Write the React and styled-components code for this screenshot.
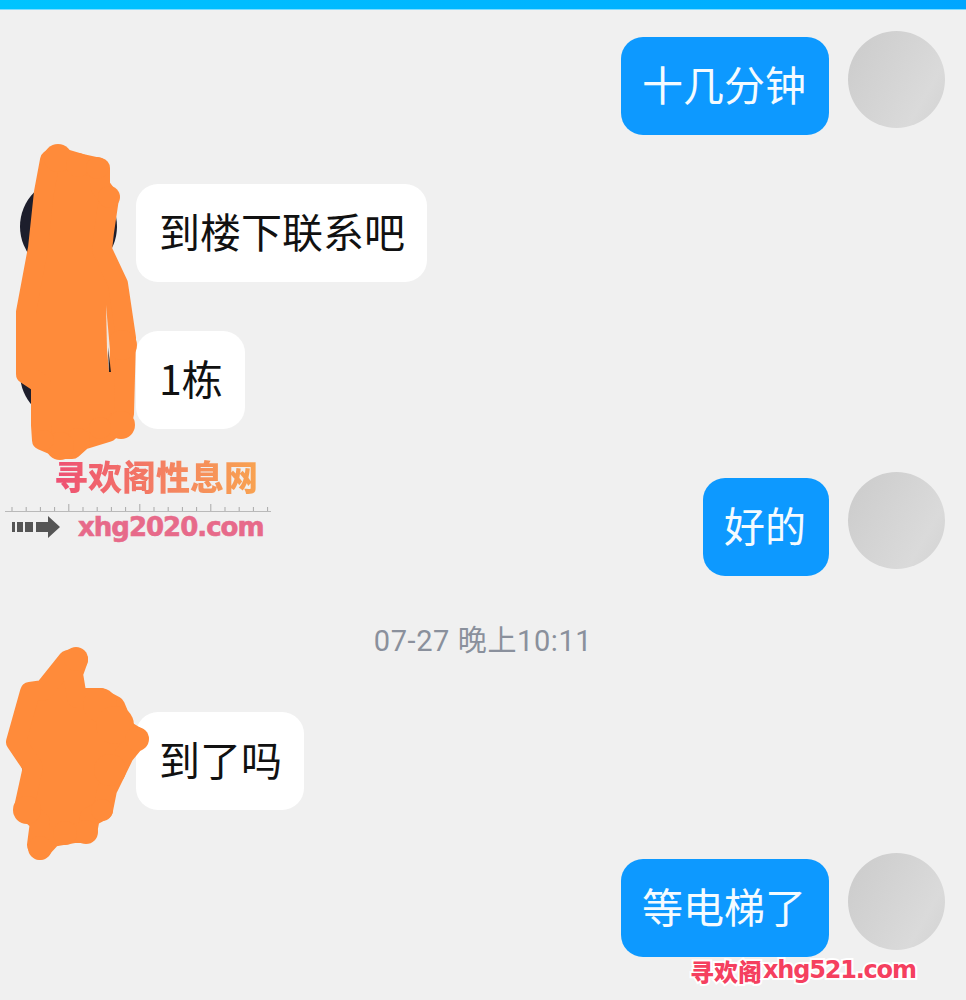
import styled, { createGlobalStyle } from "styled-components";

const Global = createGlobalStyle`
  html, body {
    margin: 0;
    padding: 0;
    background: #f0f0f0;
  }
`;

const Page = styled.div`
  position: relative;
  width: 966px;
  height: 1000px;
  overflow: hidden;
  background: #f0f0f0;
  font-family: "Noto Sans CJK SC", "Noto Sans", sans-serif;
`;

const TopBar = styled.div`
  box-sizing: border-box;
  height: 10px;
  border-bottom: 1px solid #7fdcff;
  background: linear-gradient(90deg, #00c4ff 0%, #00b6ff 50%, #00a6ff 100%);
`;

const Thread = styled.div`
  display: flex;
  flex-direction: column;
  gap: 43px;
  padding: 21px 21px 0 20px;
`;

const Row = styled.div`
  display: flex;
  flex-direction: ${(p) => (p.$mine ? "row-reverse" : "row")};
  align-items: flex-start;
  gap: 19px;
  height: 104px;
`;

const Avatar = styled.div`
  flex: none;
  width: 97px;
  height: 97px;
  border-radius: 50%;
  background: ${(p) =>
    p.$mine
      ? "linear-gradient(120deg, #cbcbcb 0%, #d6d6d6 55%, #dadada 75%, #d2d2d2 100%)"
      : "#1d1e2c"};
`;

const Bubble = styled.div`
  box-sizing: border-box;
  margin-top: 6px;
  height: 98px;
  padding: ${(p) => (p.$mine ? "0 23px 6px 21px" : "0 22px 6px 23px")};
  display: flex;
  align-items: center;
  border-radius: 22px;
  font-size: 41px;
  line-height: 1;
  color: ${(p) => (p.$mine ? "#f4fbff" : "#111111")};
  background: ${(p) => (p.$mine ? "#0d99ff" : "#ffffff")};
`;

const TimeRow = styled.div`
  box-sizing: border-box;
  height: 44px;
  padding: 0 0 6px 1px;
  display: flex;
  align-items: center;
  justify-content: center;
  font-family: "Roboto", "Noto Sans CJK SC", sans-serif;
  font-size: 29px;
  letter-spacing: 0.6px;
  color: #8a909c;
`;

const Scribble = styled.svg`
  position: absolute;
  left: 0;
  top: 0;
  pointer-events: none;
`;

const SiteMark = styled.div`
  position: absolute;
  left: 5px;
  top: 456px;
  width: 266px;
`;

const SiteTitle = styled.div`
  margin: 0 0 7px 49px;
  font-size: 34px;
  line-height: 40px;
  font-weight: 900;
  white-space: nowrap;
  background: linear-gradient(90deg, #ee4f74 0%, #f58a5e 60%, #f9a74e 100%);
  -webkit-background-clip: text;
  background-clip: text;
  color: transparent;
`;

const SiteRow = styled.div`
  display: flex;
  align-items: center;
  gap: 17px;
  margin-top: -1px;
`;

const SiteUrl = styled.div`
  font-family: "DejaVu Sans", sans-serif;
  font-size: 26px;
  line-height: 30px;
  font-weight: 700;
  color: #e76a8a;
  letter-spacing: -1px;
  -webkit-text-stroke: 0.6px #e76a8a;
  white-space: nowrap;
`;

const CornerMark = styled.div`
  position: absolute;
  left: 690px;
  top: 954px;
  display: flex;
  align-items: center;
  height: 32px;
  color: #f5405f;
  font-weight: 900;
  white-space: nowrap;
  -webkit-text-stroke: 4px #ffffff;
  paint-order: stroke fill;
`;

const CornerHan = styled.span`
  font-size: 24px;
`;

const CornerUrl = styled.span`
  font-family: "DejaVu Sans", sans-serif;
  font-size: 24px;
  font-weight: 700;
  letter-spacing: -1.2px;
  margin-left: 1px;
`;

const ticks = Array.from({ length: 19 }, (_, i) => i);

function Ruler() {
  return (
    <svg width="266" height="10" viewBox="0 0 266 10" style={{ display: "block" }}>
      <line x1="0" y1="8.5" x2="266" y2="8.5" stroke="#b9b9b9" strokeWidth="1" />
      {ticks.map((i) => (
        <line
          key={i}
          x1={7 + i * 14.2}
          x2={7 + i * 14.2}
          y1={i % 5 === 4 ? 1 : 4}
          y2="8"
          stroke="#a9a9a9"
          strokeWidth="1"
        />
      ))}
    </svg>
  );
}

function Arrow() {
  return (
    <svg width="56" height="24" viewBox="0 0 56 24" style={{ flex: "none" }}>
      <g fill="#555555">
        <rect x="7" y="7" width="3" height="10" />
        <rect x="12" y="7" width="6" height="10" />
        <rect x="20" y="7" width="8" height="10" />
        <path d="M31 7h12V1l12 11-12 11v-6H31z" />
      </g>
    </svg>
  );
}

// round dabs on the edge of the two scribbles
const dabs = [
  [58, 158, 14], [78, 165, 12], [97, 168, 11], [109, 197, 11], [121, 425, 14],
  [100, 428, 11], [78, 440, 12], [60, 446, 14], [44, 440, 10], [122, 345, 15],
  [76, 659, 12], [100, 705, 17], [115, 725, 19], [137, 739, 12], [102, 810, 11],
  [86, 832, 12], [65, 833, 12], [40, 848, 12], [27, 810, 14], [110, 770, 16],
];

const messages = [
  { mine: true, text: "十几分钟" },
  { text: "到楼下联系吧" },
  { text: "1栋" },
  { mine: true, text: "好的" },
  { time: "07-27 晚上10:11" },
  { text: "到了吗" },
  { mine: true, text: "等电梯了" },
];

export default function App() {
  return (
    <Page>
      <Global />
      <TopBar />
      <Thread>
        {messages.map((m, i) =>
          m.time ? (
            <TimeRow key={i}>{m.time}</TimeRow>
          ) : (
            <Row key={i} $mine={m.mine}>
              <Avatar $mine={m.mine} />
              <Bubble $mine={m.mine}>{m.text}</Bubble>
            </Row>
          )
        )}
      </Thread>

      <Scribble width="966" height="1000" viewBox="0 0 966 1000">
        <g fill="#ff8b3a" stroke="#ff8b3a" strokeWidth="20" strokeLinejoin="round">
          <path d="M55 156 L82 164 L100 168 L100 186 L109 198 L104 232 L102 250 L118 284 L126 338 L124 414 L108 432 L82 440 L72 449 L63 449 L42 440 L41 425 L41 384 L26 374 L26 312 L38 248 L44 192 L50 160 Z" />
          <path d="M75 658 L78 660 L73 674 L77 698 L100 698 L115 706 L125 730 L138 738 L124 755 L107 790 L103 810 L90 817 L87 833 L75 833 L52 837 L40 850 L37 845 L40 822 L24 808 L33 767 L16 742 L30 692 L44 690 L68 660 Z" />
        </g>
        <g fill="#ff8b3a">
          {dabs.map(([cx, cy, r], i) => (
            <circle key={i} cx={cx} cy={cy} r={r} />
          ))}
        </g>
        <path d="M106 305 L110 350 L109 372 L107 350 Z" fill="#f0e4dc" />
        <path d="M108 347 L111 372 L109 372 Z" fill="#2a2020" />
      </Scribble>

      <SiteMark>
        <SiteTitle>寻欢阁性息网</SiteTitle>
        <Ruler />
        <SiteRow>
          <Arrow />
          <SiteUrl>xhg2020.com</SiteUrl>
        </SiteRow>
      </SiteMark>

      <CornerMark>
        <CornerHan>寻欢阁</CornerHan>
        <CornerUrl>xhg521.com</CornerUrl>
      </CornerMark>
    </Page>
  );
}
